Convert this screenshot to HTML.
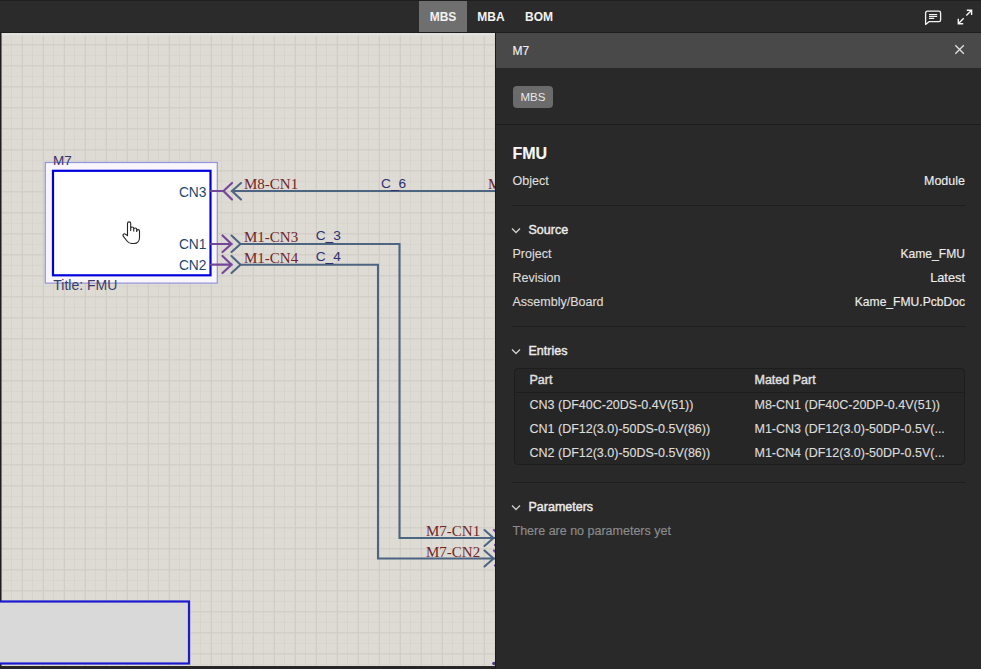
<!DOCTYPE html>
<html><head><meta charset="utf-8">
<style>
*{margin:0;padding:0;box-sizing:border-box}
html,body{width:981px;height:669px;overflow:hidden;background:#292929;font-family:"Liberation Sans",sans-serif}
.abs{position:absolute;white-space:nowrap}
#top{position:absolute;left:0;top:0;width:981px;height:33px;background:#2b2b2b;border-bottom:1px solid #1d1d1d;border-top:1px solid #1f1f1f}
.tab{position:absolute;top:0px;height:31px;color:#f2f2f2;font-size:12px;font-weight:bold;line-height:33px;text-align:center}
#canvas{position:absolute;left:0;top:0;width:495px;height:669px}
#panel{position:absolute;left:495px;top:33px;width:486px;height:636px;background:#292929;border-left:1px solid #1b1b1b}
#phead{position:absolute;left:0;top:0;width:486px;height:35px;background:#494949}
.t{position:absolute;white-space:nowrap;font-size:12.5px;line-height:16px;color:#dcdcdc;-webkit-text-stroke-width:0.15px}
.r{text-align:right}
.sep{position:absolute;height:1px;background:#1e1e1e}
.sec{font-size:12.5px;color:#ececec;-webkit-text-stroke-width:0.4px}
</style></head><body>

<svg id="canvas" width="495" height="669" viewBox="0 0 495 669">
  <defs>
    <pattern id="gmin" x="0.5" y="2.3" width="10.5" height="10.5" patternUnits="userSpaceOnUse">
      <path d="M0 0.5H10.5M0.5 0V10.5" stroke="#d7d4ce" stroke-width="1" fill="none"/>
    </pattern>
    <pattern id="gmaj" x="0.9" y="2.3" width="21" height="21" patternUnits="userSpaceOnUse">
      <path d="M0 0.5H21M0.5 0V21" stroke="#d0ccc6" stroke-width="1" fill="none"/>
    </pattern>
  </defs>
  <rect x="0" y="33" width="495" height="633" fill="#dedbd5"/>
  <rect x="0" y="33" width="495" height="633" fill="url(#gmin)"/>
  <rect x="0" y="33" width="495" height="633" fill="url(#gmaj)"/>
  <rect x="0" y="33" width="495" height="2.5" fill="#e2e1de"/>
  <rect x="0" y="33" width="1.5" height="636" fill="#1e1e1e"/>
  <rect x="0" y="666" width="495" height="3" fill="#262626"/>

  <!-- bottom box -->
  <rect x="-2" y="601.5" width="191" height="62" fill="#d9d9d9" stroke="#1a1ad0" stroke-width="2.2"/>

  <!-- selection rect -->
  <rect x="45.3" y="162.5" width="172" height="120.6" fill="#f8f6fa" stroke="#9494dc" stroke-width="1.2"/>
  <!-- module box -->
  <rect x="53" y="170.8" width="157.5" height="104.5" fill="#ffffff" stroke="#0000dc" stroke-width="2.2"/>

  <text x="53" y="164.6" font-family="Liberation Sans" font-size="13.5" fill="#34346c">M7</text>
  <text x="53.3" y="289.6" font-family="Liberation Sans" font-size="14" fill="#383e68">Title: FMU</text>

  <g font-family="Liberation Sans" font-size="13.8" fill="#1c4870" text-anchor="end">
    <text x="206.5" y="197">CN3</text>
    <text x="206.5" y="249">CN1</text>
    <text x="206.5" y="269.8">CN2</text>
  </g>

  <!-- pins -->
  <g stroke="#75479a" stroke-width="2.2" fill="none" stroke-linecap="round" stroke-linejoin="round">
    <path d="M211 191H223.5"/>
    <path d="M232 183L223.5 191L232 199.5"/>
    <path d="M211 244H231.5"/>
    <path d="M222.5 235.5L231.5 244L222.5 252"/>
    <path d="M211 264.7H231.5"/>
    <path d="M222.5 256L231.5 264.7L222.5 273"/>
    <path d="M494 530L502.5 538L494 546" stroke-dasharray="2 2"/>
    <path d="M494 550.5L502.5 558.5L494 566.5" stroke-dasharray="2 2"/>
  </g>
  <circle cx="494" cy="663.5" r="1.8" fill="#4a3d78"/>
  <g stroke="#4d6581" stroke-width="2.1" fill="none" stroke-linecap="round" stroke-linejoin="miter">
    <path d="M241 183L232 191L241 199.5"/>
    <path d="M232 191H495"/>
    <path d="M231.5 235.5L240.5 244L231.5 252"/>
    <path d="M240 244H399.5V538H495"/>
    <path d="M231.5 256L240.5 264.7L231.5 273"/>
    <path d="M240 264.7H378V558.5H495"/>
    <path d="M484.5 530L493.5 538L484.5 546"/>
    <path d="M484.5 550.5L493.5 558.5L484.5 566.5"/>
  </g>

  <g font-family="Liberation Serif" font-size="15" fill="#702626">
    <text x="244" y="189.2">M8-CN1</text>
    <text x="244" y="241.6">M1-CN3</text>
    <text x="244" y="262.6">M1-CN4</text>
    <text x="488" y="189.2">M</text>
    <text x="426" y="535.7">M7-CN1</text>
    <text x="426" y="556.8">M7-CN2</text>
  </g>
  <g font-family="Liberation Sans" font-size="13.7" fill="#2d3070">
    <text x="381" y="187.6">C_6</text>
    <text x="315.7" y="240">C_3</text>
    <text x="315.7" y="261">C_4</text>
  </g>

  <!-- hand cursor -->
  <path transform="translate(-1,-1)" d="M128.5 236.5V224.5a1.6 1.6 0 0 1 3.2 0V232V229.5a1.5 1.5 0 0 1 3 0V232.5V230.5a1.5 1.5 0 0 1 3 0V233V232a1.4 1.4 0 0 1 2.8 0V238.5c0 3.5-2.2 6-5.5 6h-2.5c-2 0-3.3-1-4.5-2.5l-3.8-4.8a1.5 1.5 0 0 1 2.2-2z" fill="#ffffff" stroke="#222" stroke-width="1.1"/>
</svg>

<div id="top">
  <div class="tab" style="left:419px;width:48px;background:#6f6f6f">MBS</div>
  <div class="tab" style="left:467px;width:48px">MBA</div>
  <div class="tab" style="left:515px;width:48px">BOM</div>
  <svg class="abs" style="left:920px;top:5px" width="56" height="24" viewBox="920 6 56 24">
    <g fill="none" stroke="#f4f4f4" stroke-width="1.3" stroke-linecap="round" stroke-linejoin="round">
      <path d="M927.3 11.2H938.9a1.7 1.7 0 0 1 1.7 1.7V19.9a1.7 1.7 0 0 1-1.7 1.7H929.3L925.6 24.4V12.9a1.7 1.7 0 0 1 1.7-1.7z"/>
    </g>
    <g fill="none" stroke="#f4f4f4" stroke-width="1.1" stroke-linecap="butt">
      <path d="M929 14.6H937.2M929 16.5H937.2M929 18.4H934.2"/>
    </g>
    <g fill="none" stroke="#f4f4f4" stroke-width="1.4" stroke-linecap="butt" stroke-linejoin="miter">
      <path d="M966.8 10.3H971.6V15.1M971.4 10.5L966.3 15.6"/>
      <path d="M958.3 18.8V23.7H963.2M958.5 23.5L963.7 18.3"/>
    </g>
  </svg>
</div>

<div id="panel">
  <div id="phead">
    <div class="t" style="left:16.5px;top:10px;font-size:12px;line-height:16px;color:#f0f0f0">M7</div>
    <svg class="abs" style="left:458px;top:11px" width="11" height="11" viewBox="0 0 11 11">
      <path d="M1.3 1.3L9.8 9.8M9.8 1.3L1.3 9.8" stroke="#e0e0e0" stroke-width="1.3"/>
    </svg>
  </div>
  <div class="abs" style="left:17px;top:53px;width:40px;height:22px;background:#6b6b6b;border-radius:4px;color:#e9e9e9;font-size:11.5px;line-height:22px;text-align:center">MBS</div>
  <div class="sep" style="left:0;top:91px;width:486px"></div>

  <div class="t" style="left:16.5px;top:111px;font-size:16px;line-height:20px;font-weight:bold;color:#f6f6f6">FMU</div>
  <div class="t" style="left:16.5px;top:140px">Object</div>
  <div class="t r" style="right:16px;top:140px;color:#ececec">Module</div>
  <div class="sep" style="left:16px;top:172px;width:454px"></div>

  <svg class="abs" style="left:15px;top:193.6px" width="10" height="8" viewBox="0 0 10 8"><path d="M1 1.5L5 5.5L9 1.5" stroke="#cfcfcf" stroke-width="1.3" fill="none"/></svg>
  <div class="t sec" style="left:32.5px;top:189px">Source</div>
  <div class="t" style="left:16.5px;top:213px">Project</div>
  <div class="t r" style="right:16px;top:213px;color:#ececec;font-size:12.1px">Kame_FMU</div>
  <div class="t" style="left:16.5px;top:237px">Revision</div>
  <div class="t r" style="right:16px;top:237px;color:#ececec;font-size:12.8px">Latest</div>
  <div class="t" style="left:16.5px;top:261px">Assembly/Board</div>
  <div class="t r" style="right:16px;top:261px;color:#ececec;font-size:12.1px">Kame_FMU.PcbDoc</div>
  <div class="sep" style="left:16px;top:293px;width:454px"></div>

  <svg class="abs" style="left:15px;top:314.6px" width="10" height="8" viewBox="0 0 10 8"><path d="M1 1.5L5 5.5L9 1.5" stroke="#cfcfcf" stroke-width="1.3" fill="none"/></svg>
  <div class="t sec" style="left:32.5px;top:310px">Entries</div>

  <div class="abs" style="left:18px;top:335px;width:451px;height:97px;background:#262626;border:1px solid #1d1d1d;border-radius:4px">
    <div class="abs" style="left:0;top:0;width:449px;height:24px;border-bottom:1px solid #1d1d1d"></div>
    <div class="t sec" style="left:14.5px;top:3px;color:#e0e0e0">Part</div>
    <div class="t sec" style="left:239.5px;top:3px;color:#e0e0e0">Mated Part</div>
    <div class="t" style="left:14.5px;top:28px">CN3 (DF40C-20DS-0.4V(51))</div>
    <div class="t" style="left:239.5px;top:28px">M8-CN1 (DF40C-20DP-0.4V(51))</div>
    <div class="t" style="left:14.5px;top:52px">CN1 (DF12(3.0)-50DS-0.5V(86))</div>
    <div class="t" style="left:239.5px;top:52px">M1-CN3 (DF12(3.0)-50DP-0.5V(...</div>
    <div class="t" style="left:14.5px;top:76px">CN2 (DF12(3.0)-50DS-0.5V(86))</div>
    <div class="t" style="left:239.5px;top:76px">M1-CN4 (DF12(3.0)-50DP-0.5V(...</div>
  </div>
  <div class="sep" style="left:16px;top:449px;width:454px"></div>

  <svg class="abs" style="left:15px;top:470.6px" width="10" height="8" viewBox="0 0 10 8"><path d="M1 1.5L5 5.5L9 1.5" stroke="#cfcfcf" stroke-width="1.3" fill="none"/></svg>
  <div class="t sec" style="left:32.5px;top:466px">Parameters</div>
  <div class="t" style="left:16.5px;top:490px;color:#8c8c8c">There are no parameters yet</div>
</div>
</body></html>
